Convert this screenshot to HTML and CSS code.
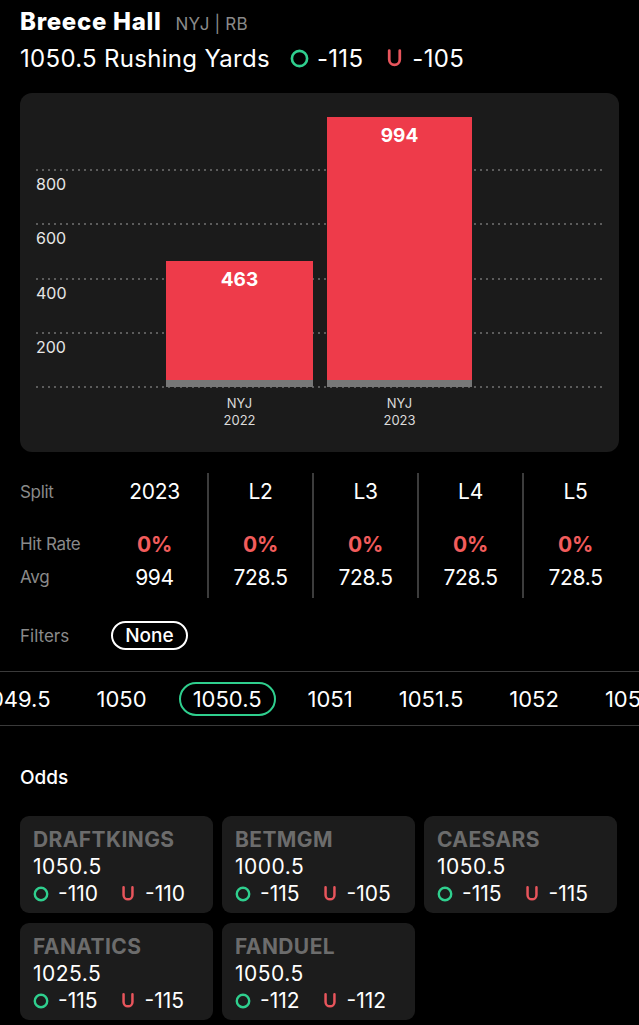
FILE: index.html
```html
<!DOCTYPE html>
<html lang="en">

<head>
    <meta charset="utf-8">
    <meta name="viewport" content="width=device-width, initial-scale=1.0">
    <title>Breece Hall - Rushing Yards</title>
    <link rel="stylesheet" href="styles.css">
</head>

<body>
    <main>
        <header class="player">
            <h1 class="name">Breece Hall <span class="meta">NYJ | RB</span></h1>
            <div class="prop">
                <span class="prop-line">1050.5 Rushing Yards</span>
                <span class="odd big">
                    <svg class="ico" viewBox="0 0 18 18"><circle cx="9" cy="9" r="7.2" fill="none" stroke="#2fcf8e" stroke-width="2.5"/></svg>
                    -115
                </span>
                <span class="odd big">
                    <svg class="ico" viewBox="0 0 18 18"><path d="M4 1.5 V10 a5 5 0 0 0 10 0 V1.5" fill="none" stroke="#e8555c" stroke-width="2.6" stroke-linecap="round"/></svg>
                    -105
                </span>
            </div>
        </header>

        <section class="chart">
            <div class="plot">
                <div class="grid-line" style="bottom: 217px"></div>
                <div class="grid-line" style="bottom: 162.75px"></div>
                <div class="grid-line" style="bottom: 108.5px"></div>
                <div class="grid-line" style="bottom: 54.25px"></div>
                <div class="grid-line" style="bottom: 0"></div>
                <span class="axis" style="bottom: 193px">800</span>
                <span class="axis" style="bottom: 138.75px">600</span>
                <span class="axis" style="bottom: 84.5px">400</span>
                <span class="axis" style="bottom: 30.25px">200</span>

                <div class="bar first" style="height: 126px"><span>463</span></div>
                <div class="bar" style="height: 270px"><span>994</span></div>
            </div>
            <div class="x-labels">
                <div class="x-label first">NYJ<br>2022</div>
                <div class="x-label">NYJ<br>2023</div>
            </div>
        </section>

        <section class="splits">
            <div class="split-col labels">
                <div class="cell head">Split</div>
                <div class="cell">Hit Rate</div>
                <div class="cell">Avg</div>
            </div>
            <div class="split-col">
                <div class="cell head">2023</div>
                <div class="cell rate">0%</div>
                <div class="cell">994</div>
            </div>
            <div class="split-col sep">
                <div class="cell head">L2</div>
                <div class="cell rate">0%</div>
                <div class="cell">728.5</div>
            </div>
            <div class="split-col sep">
                <div class="cell head">L3</div>
                <div class="cell rate">0%</div>
                <div class="cell">728.5</div>
            </div>
            <div class="split-col sep">
                <div class="cell head">L4</div>
                <div class="cell rate">0%</div>
                <div class="cell">728.5</div>
            </div>
            <div class="split-col sep">
                <div class="cell head">L5</div>
                <div class="cell rate">0%</div>
                <div class="cell">728.5</div>
            </div>
        </section>

        <div class="filters">
            <span class="filters-label">Filters</span>
            <button class="pill">None</button>
        </div>

        <nav class="lines">
            <div class="lines-track">
                <span class="line">1049.5</span>
                <span class="line">1050</span>
                <span class="line active">1050.5</span>
                <span class="line">1051</span>
                <span class="line">1051.5</span>
                <span class="line">1052</span>
                <span class="line">1052.5</span>
            </div>
        </nav>

        <h2 class="odds-title">Odds</h2>

        <section class="books">
            <article class="book">
                <h3>DRAFTKINGS</h3>
                <div class="book-line">1050.5</div>
                <div class="book-odds">
                    <span class="odd"><svg class="ico sm" viewBox="0 0 18 18"><circle cx="9" cy="9" r="7" fill="none" stroke="#2fcf8e" stroke-width="2.7"/></svg>-110</span>
                    <span class="odd"><svg class="ico sm" viewBox="0 0 18 18"><path d="M4 1.5 V10 a5 5 0 0 0 10 0 V1.5" fill="none" stroke="#e8555c" stroke-width="2.8" stroke-linecap="round"/></svg>-110</span>
                </div>
            </article>
            <article class="book">
                <h3>BETMGM</h3>
                <div class="book-line">1000.5</div>
                <div class="book-odds">
                    <span class="odd"><svg class="ico sm" viewBox="0 0 18 18"><circle cx="9" cy="9" r="7" fill="none" stroke="#2fcf8e" stroke-width="2.7"/></svg>-115</span>
                    <span class="odd"><svg class="ico sm" viewBox="0 0 18 18"><path d="M4 1.5 V10 a5 5 0 0 0 10 0 V1.5" fill="none" stroke="#e8555c" stroke-width="2.8" stroke-linecap="round"/></svg>-105</span>
                </div>
            </article>
            <article class="book">
                <h3>CAESARS</h3>
                <div class="book-line">1050.5</div>
                <div class="book-odds">
                    <span class="odd"><svg class="ico sm" viewBox="0 0 18 18"><circle cx="9" cy="9" r="7" fill="none" stroke="#2fcf8e" stroke-width="2.7"/></svg>-115</span>
                    <span class="odd"><svg class="ico sm" viewBox="0 0 18 18"><path d="M4 1.5 V10 a5 5 0 0 0 10 0 V1.5" fill="none" stroke="#e8555c" stroke-width="2.8" stroke-linecap="round"/></svg>-115</span>
                </div>
            </article>
            <article class="book">
                <h3>FANATICS</h3>
                <div class="book-line">1025.5</div>
                <div class="book-odds">
                    <span class="odd"><svg class="ico sm" viewBox="0 0 18 18"><circle cx="9" cy="9" r="7" fill="none" stroke="#2fcf8e" stroke-width="2.7"/></svg>-115</span>
                    <span class="odd"><svg class="ico sm" viewBox="0 0 18 18"><path d="M4 1.5 V10 a5 5 0 0 0 10 0 V1.5" fill="none" stroke="#e8555c" stroke-width="2.8" stroke-linecap="round"/></svg>-115</span>
                </div>
            </article>
            <article class="book">
                <h3>FANDUEL</h3>
                <div class="book-line">1050.5</div>
                <div class="book-odds">
                    <span class="odd"><svg class="ico sm" viewBox="0 0 18 18"><circle cx="9" cy="9" r="7" fill="none" stroke="#2fcf8e" stroke-width="2.7"/></svg>-112</span>
                    <span class="odd"><svg class="ico sm" viewBox="0 0 18 18"><path d="M4 1.5 V10 a5 5 0 0 0 10 0 V1.5" fill="none" stroke="#e8555c" stroke-width="2.8" stroke-linecap="round"/></svg>-112</span>
                </div>
            </article>
        </section>
    </main>
</body>

</html>
```

FILE: styles.css
```css
body {
    margin: 0;
    background: #000;
    color: #fff;
    font-family: Inter, "Noto Sans", sans-serif;
}

main {
    width: 639px;
    overflow: hidden;
}

/* header */
.player {
    padding: 8px 20px 0;
}

.name {
    margin: 0;
    font-size: 24px;
    line-height: 28px;
    font-weight: 800;
    letter-spacing: 0.7px;
}

.meta {
    font-size: 17px;
    font-weight: 400;
    color: #8a8a8a;
    margin-left: 8px;
    letter-spacing: 0.2px;
}

.prop {
    display: flex;
    align-items: center;
    height: 32px;
    margin-top: 4px;
    font-size: 24px;
    letter-spacing: 0.3px;
}

.prop-line {
    margin-right: 20px;
}

.odd {
    display: inline-flex;
    align-items: center;
    gap: 8px;
}

.odd.big {
    margin-right: 22px;
}

.ico {
    width: 19px;
    height: 19px;
}

.ico.sm {
    width: 16px;
    height: 16px;
}

/* chart */
.chart {
    margin: 19px 20px 0;
    background: #1b1b1b;
    border-radius: 12px;
    padding: 14px 17px 23px 16px;
}

.plot {
    position: relative;
    height: 280px;
    display: flex;
    align-items: flex-end;
    gap: 14px;
    padding-left: 130px;
}

.grid-line {
    position: absolute;
    left: 0;
    right: 0;
    height: 2px;
    margin-bottom: -1px;
    background: repeating-linear-gradient(to right, #5c5c5c 0 2px, transparent 2px 6px);
}

.axis {
    position: absolute;
    left: 0;
    font-size: 16px;
    line-height: 20px;
    color: #e6e6e6;
}

.bar {
    position: relative;
    width: 145px;
    box-sizing: border-box;
    background: #ee3b4a;
    border-bottom: 7px solid #777;
    text-align: center;
}

.bar.first {
    width: 147px;
}

.bar span {
    display: block;
    margin-top: 7px;
    font-size: 19px;
    line-height: 24px;
    font-weight: 700;
}

.x-labels {
    display: flex;
    gap: 14px;
    padding-left: 130px;
    margin-top: 8px;
}

.x-label {
    width: 145px;
    text-align: center;
    font-size: 13px;
    line-height: 17px;
    color: #dcdcdc;
}

.x-label.first {
    width: 147px;
}

/* splits */
.splits {
    display: grid;
    grid-template-columns: 82px repeat(5, 105px);
    margin: 21px 0 0 20px;
}

.split-col {
    display: flex;
    flex-direction: column;
    align-items: center;
    padding-bottom: 4px;
    font-size: 21px;
}

.split-col.labels {
    align-items: flex-start;
    font-size: 17px;
    color: #8a8a8a;
}

.split-col.sep {
    border-left: 2px solid #3c3c3c;
}

.cell {
    height: 33px;
    line-height: 33px;
    letter-spacing: -0.3px;
}

.cell.head {
    height: 38px;
    line-height: 38px;
    margin-bottom: 17px;
}

.cell.rate {
    color: #f25c5c;
    font-weight: 700;
}

/* filters */
.filters {
    display: flex;
    align-items: center;
    gap: 42px;
    margin: 23px 20px 0;
}

.filters-label {
    font-size: 17px;
    color: #8a8a8a;
}

.pill {
    height: 29px;
    padding: 0 12px;
    border: 2px solid #fff;
    border-radius: 15px;
    background: none;
    color: #fff;
    font-family: inherit;
    font-size: 19px;
    font-weight: 500;
}

/* line selector */
.lines {
    margin-top: 21px;
    height: 53px;
    border-top: 1px solid #3a3a3a;
    border-bottom: 1px solid #3a3a3a;
    display: flex;
    align-items: center;
    overflow: hidden;
}

.lines-track {
    display: flex;
    gap: 18px;
    margin-left: -33px;
    white-space: nowrap;
}

.line {
    height: 30px;
    line-height: 30px;
    padding: 0 12px;
    border: 2px solid transparent;
    border-radius: 17px;
    font-size: 22px;
    letter-spacing: 0;
}

.line.active {
    border-color: #2fcf8e;
}

/* odds */
.odds-title {
    margin: 40px 20px 0;
    font-size: 19px;
    line-height: 24px;
    font-weight: 500;
}

.books {
    display: grid;
    grid-template-columns: repeat(3, 193px);
    gap: 10px 9px;
    margin: 26px 20px 0;
}

.book {
    background: #1c1c1c;
    border-radius: 9px;
    padding: 10px 13px 6px;
}

.book h3 {
    margin: 0;
    font-size: 21px;
    line-height: 27px;
    font-weight: 700;
    color: #6c6c6c;
    letter-spacing: 0.4px;
}

.book-line {
    font-size: 21px;
    line-height: 27px;
    letter-spacing: 0.5px;
}

.book-odds {
    display: flex;
    gap: 22px;
    font-size: 21px;
    line-height: 27px;
    letter-spacing: 0;
}

.book-odds .odd {
    gap: 9px;
}
```
